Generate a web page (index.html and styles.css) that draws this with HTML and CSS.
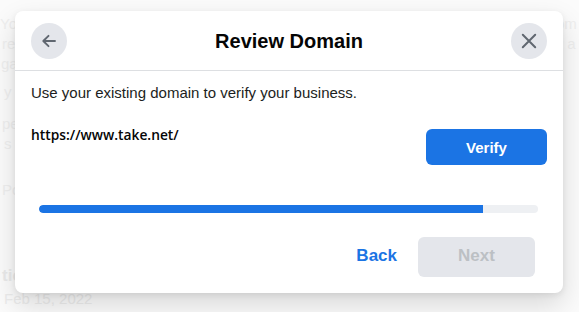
FILE: index.html
```html
<!DOCTYPE html>
<html>
<head>
<meta charset="utf-8">
<link rel="stylesheet" href="styles.css">
</head>
<body>
<div class="backdrop">
  <div class="bg-left">
    <p class="bg-line l1">You</p>
    <p class="bg-line l2">rec</p>
    <p class="bg-line l3">gai</p>
    <p class="bg-line l4">y</p>
    <p class="bg-line l5">pe</p>
    <p class="bg-line l6">s b</p>
    <p class="bg-line l7">Po</p>
    <p class="bg-line l8 bold">tic</p>
    <p class="bg-line l9">Feb 15, 2022</p>
  </div>
  <div class="bg-right">
    <p class="bg-line r1">om</p>
    <p class="bg-line r2">r a</p>
  </div>
</div>

<div class="dialog">
  <header class="dialog-header">
    <button class="circle-btn" aria-label="Back">
      <svg width="20" height="20" viewBox="0 0 20 20"><path d="M16 10H4.5M9.5 4.8 4.3 10l5.2 5.2" fill="none" stroke="#606770" stroke-width="1.9" stroke-linecap="round" stroke-linejoin="round"/></svg>
    </button>
    <h1 class="title">Review Domain</h1>
    <button class="circle-btn" aria-label="Close">
      <svg width="20" height="20" viewBox="0 0 20 20"><path d="M3.8 3.8 16.2 16.2M16.2 3.8 3.8 16.2" fill="none" stroke="#606770" stroke-width="2" stroke-linecap="round"/></svg>
    </button>
  </header>
  <div class="dialog-body">
    <p class="intro">Use your existing domain to verify your business.</p>
    <div class="domain-row">
      <span class="domain">https://www.take.net/</span>
      <button class="btn-primary">Verify</button>
    </div>
    <div class="progress"><div class="progress-fill" style="width:89%"></div></div>
    <div class="footer">
      <button class="btn-link">Back</button>
      <button class="btn-disabled">Next</button>
    </div>
  </div>
</div>
</body>
</html>
```
FILE: styles.css
```css
* { box-sizing: border-box; }
html, body { margin: 0; padding: 0; }
body {
  width: 579px;
  height: 312px;
  background: #fbfbfb;
  font-family: "Liberation Sans", Arial, sans-serif;
  position: relative;
  overflow: hidden;
}
.backdrop { position: absolute; inset: 0; }
.bg-line {
  position: absolute;
  margin: 0;
  font-size: 15px;
  color: #efefef;
  white-space: nowrap;
}
.bold { font-weight: bold; font-size: 17px; color: #eaeaea; }
.l1 { left: 0px; top: 15px; }
.l2 { left: 2px; top: 35px; }
.l3 { left: 1px; top: 55px; }
.l4 { left: 4px; top: 83px; }
.l5 { left: 2px; top: 115px; }
.l6 { left: 4px; top: 135px; }
.l7 { left: 2px; top: 181px; }
.l8 { left: 2px; top: 266px; }
.l9 { left: 4px; top: 290px; color: #ececec; }
.r1 { left: 556px; top: 15px; }
.r2 { left: 558px; top: 35px; }

.dialog {
  position: absolute;
  left: 15px;
  top: 11px;
  width: 548px;
  height: 282px;
  background: #fff;
  border-radius: 8px;
  box-shadow: 0 12px 28px rgba(0,0,0,0.14), 0 2px 6px rgba(0,0,0,0.08);
  display: flex;
  flex-direction: column;
}
.dialog-header {
  display: flex;
  align-items: center;
  justify-content: space-between;
  padding: 12px 16px 11px 16px;
  border-bottom: 1px solid #dddfe2;
}
.circle-btn {
  width: 36px;
  height: 36px;
  border-radius: 50%;
  border: none;
  background: #e4e6eb;
  display: flex;
  align-items: center;
  justify-content: center;
  padding: 0;
}
.title {
  margin: 0;
  font-size: 20px;
  font-weight: bold;
  color: #050505;
}
.dialog-body {
  padding: 13px 16px 0 16px;
  display: flex;
  flex-direction: column;
}
.intro {
  margin: 0;
  font-size: 15px;
  color: #1c1e21;
  line-height: 18px;
}
.domain-row {
  display: flex;
  justify-content: space-between;
  align-items: flex-start;
  margin-top: 19px;
}
.domain {
  font-family: "Open Sans", sans-serif;
  font-weight: 600;
  font-size: 13.8px;
  color: #050505;
  line-height: 18px;
  margin-top: 5px;
}
.btn-primary {
  width: 121px;
  height: 36px;
  margin-top: 8px;
  border: none;
  border-radius: 6px;
  background: #1b74e4;
  color: #fff;
  font-family: "Liberation Sans", Arial, sans-serif;
  font-weight: bold;
  font-size: 15px;
}
.progress {
  margin: 40px 9px 0 8px;
  height: 8px;
  border-radius: 4px;
  background: #eef0f3;
  overflow: hidden;
}
.progress-fill {
  height: 100%;
  background: #1b74e4;
  border-radius: 4px 0 0 4px;
}
.footer {
  display: flex;
  justify-content: flex-end;
  align-items: center;
  gap: 21px;
  margin-top: 24px;
  padding-right: 12px;
}
.btn-link {
  border: none;
  background: none;
  padding: 0 0 3px 0;
  color: #1b74e4;
  font-family: "Liberation Sans", Arial, sans-serif;
  font-weight: bold;
  font-size: 17px;
}
.btn-disabled {
  width: 117px;
  height: 40px;
  border: none;
  border-radius: 6px;
  background: #e4e6eb;
  color: #bcc0c4;
  font-family: "Liberation Sans", Arial, sans-serif;
  font-weight: bold;
  font-size: 17px;
  padding-bottom: 3px;
}
```
